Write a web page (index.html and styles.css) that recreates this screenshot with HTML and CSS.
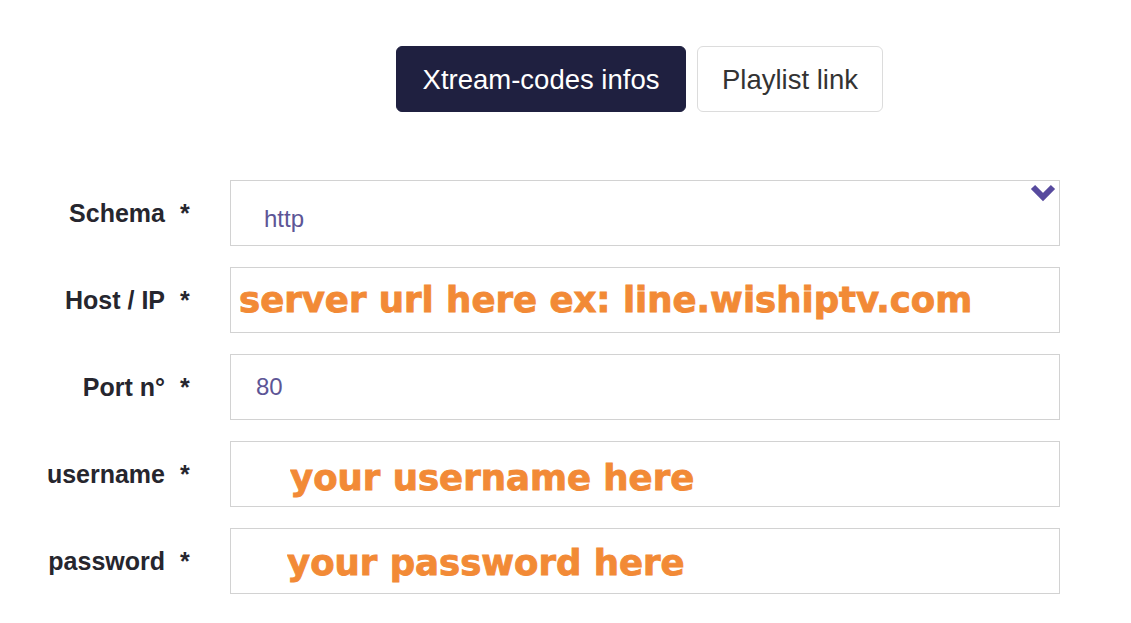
FILE: index.html
```html
<!DOCTYPE html>
<html lang="en">
<head>
  <meta charset="UTF-8">
  <meta name="viewport" content="width=device-width, initial-scale=1.0">
  <title>Add playlist</title>
  <link rel="stylesheet" href="styles.css">
</head>
<body>
  <div class="page">
    <div class="tabs">
      <button class="tab active">Xtream-codes infos</button>
      <button class="tab">Playlist link</button>
    </div>

    <!-- Xtream-codes form -->
    <form class="xtream-form">
      <div class="row">
        <label class="label" for="schema"><span>Schema</span><span class="req">*</span></label>
        <div class="select-wrap">
          <select id="schema" class="field select">
            <option>http</option>
            <option>https</option>
          </select>
          <svg class="chevron" width="26" height="18" viewBox="0 0 26 18">
            <path d="M3 3 L13 13 L23 3" fill="none" stroke="#574a9e" stroke-width="6" stroke-linejoin="miter"/>
          </svg>
        </div>
      </div>

      <div class="row">
        <label class="label" for="host"><span>Host / IP</span><span class="req">*</span></label>
        <input id="host" class="field hint" type="text" value="server url here ex: line.wishiptv.com">
      </div>

      <div class="row">
        <label class="label" for="port"><span>Port n°</span><span class="req">*</span></label>
        <input id="port" class="field plain" type="text" value="80">
      </div>

      <div class="row">
        <label class="label" for="username"><span>username</span><span class="req">*</span></label>
        <input id="username" class="field hint indent user" type="text" value="your username here">
      </div>

      <div class="row">
        <label class="label" for="password"><span>password</span><span class="req">*</span></label>
        <input id="password" class="field hint indent pass" type="text" value="your password here">
      </div>
    </form>
  </div>
</body>
</html>
```

FILE: styles.css
```css
/* General Styling */
body {
  margin: 0;
  padding: 0;
  background: #fff;
  font-family: 'Liberation Sans', Arial, sans-serif;
  color: #2b2b33;
}

.page {
  width: 1131px;
  padding-top: 46px;
}

/* Tabs */
.tabs {
  display: flex;
  justify-content: center;
  gap: 11px;
  margin-left: 230px;
  width: 819px;
  padding-right: 11px;
}

.tab {
  height: 66px;
  padding-top: 3px;
  border-radius: 6px;
  font-family: 'Liberation Sans', Arial, sans-serif;
  font-size: 27.5px;
  cursor: pointer;
  background: #fff;
  color: #333;
  border: 1px solid #dcdcdc;
  width: 186px;
}

.tab.active {
  width: 290px;
  background: #1f2040;
  border-color: #1f2040;
  color: #fff;
}

/* Form */
.xtream-form {
  margin-top: 68px;
  display: flex;
  flex-direction: column;
  gap: 21px;
}

.row {
  display: grid;
  grid-template-columns: 190px 830px;
  column-gap: 40px;
  align-items: center;
}

.label {
  display: flex;
  justify-content: flex-end;
  gap: 15px;
  font-size: 25px;
  font-weight: bold;
  color: #26262e;
}

.req {
  width: 10px;
}

.field {
  box-sizing: border-box;
  width: 830px;
  height: 66px;
  margin: 0;
  border: 1px solid #d2d2d2;
  border-radius: 0;
  background: #fff;
  outline: none;
}

.select-wrap {
  position: relative;
}

.select {
  appearance: none;
  -webkit-appearance: none;
  padding: 10px 0 0 33px;
  font-family: 'Liberation Sans', Arial, sans-serif;
  font-size: 24px;
  color: #5d5596;
}

.chevron {
  position: absolute;
  top: 4px;
  right: 4px;
}

.plain {
  padding-left: 25px;
  font-family: 'Liberation Sans', Arial, sans-serif;
  font-size: 24px;
  color: #5d5596;
}

.hint {
  padding-left: 8px;
  padding-bottom: 2px;
  font-family: 'DejaVu Sans', sans-serif;
  font-weight: bold;
  font-size: 35.5px;
  color: #f28a36;
  -webkit-text-stroke: 0.9px #f28a36;
}

.indent.user {
  padding-left: 59px;
  padding-top: 8px;
}

.indent.pass {
  padding-left: 56px;
  padding-top: 4px;
}
```
